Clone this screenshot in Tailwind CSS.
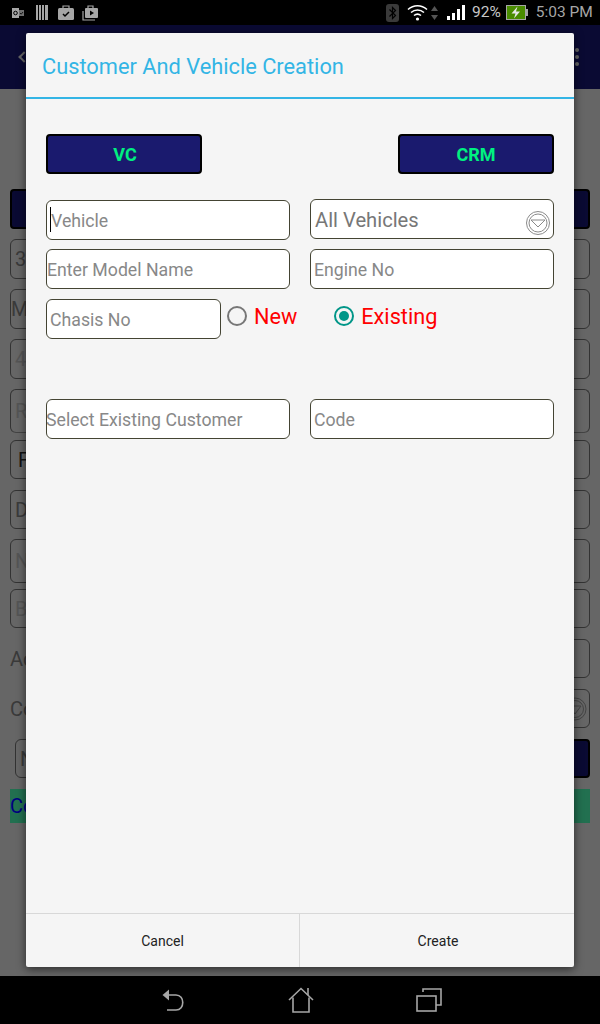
<!DOCTYPE html>
<html lang="en">
<head>
    <meta charset="UTF-8">
    <meta name="viewport" content="width=device-width, initial-scale=1.0">
    <title>Customer And Vehicle Creation</title>
    <script src="https://cdn.jsdelivr.net/npm/@tailwindcss/browser@4"></script>
</head>
<body class="bg-black">
    <div class="relative w-[600px] h-[1024px] overflow-hidden flex flex-col font-['Roboto',sans-serif]">
        <!-- Status bar -->
        <div class="h-[25px] bg-black flex items-center text-[#a6a6a6] shrink-0">
            <div class="flex items-center pl-[12px] w-[380px]">
                <svg width="12" height="10" viewBox="0 0 12 10"><rect x="0" y="0" width="7" height="10" fill="#a6a6a6"/><rect x="7" y="2" width="5" height="6" fill="#707070"/><circle cx="3.500" cy="5" r="1.800" fill="none" stroke="#000"/><path d="M8 5l1.200 1.200L11 4" fill="none" stroke="#000" stroke-width="0.800"/></svg>
                <svg class="ml-[12px]" width="12" height="15" viewBox="0 0 12 15" fill="#a6a6a6"><rect x="0" y="0" width="2" height="15"/><rect x="3" y="0" width="2" height="15"/><rect x="6" y="0" width="2" height="15"/><rect x="9" y="0" width="3" height="15"/></svg>
                <svg class="ml-[10px]" width="16" height="15" viewBox="0 0 16 15"><path d="M5 3V1h6v2" fill="none" stroke="#a6a6a6" stroke-width="1.200"/><rect x="0" y="3" width="16" height="12" rx="1.500" fill="#a6a6a6"/><path d="M5 9l2 2 4-4" fill="none" stroke="#000" stroke-width="1.500"/></svg>
                <svg class="ml-[8px]" width="16" height="16" viewBox="0 0 16 16"><path d="M1 6v9h12" fill="none" stroke="#a6a6a6" stroke-width="1.200"/><path d="M6 3V1h5v2" fill="none" stroke="#a6a6a6" stroke-width="1.200"/><rect x="3" y="3" width="13" height="10" rx="1" fill="#a6a6a6"/><path d="M8 5.500v5l4-2.500z" fill="#000"/></svg>
            </div>
            <svg class="ml-[6px]" width="13" height="18" viewBox="0 0 13 18"><rect width="13" height="18" rx="3" fill="#3a3a3a"/><path d="M3.500 5.500l6 6-3 3v-11l3 3-6 6" fill="none" stroke="#000" stroke-width="1.200"/></svg>
            <svg class="ml-[8px]" width="21" height="17" viewBox="0 0 21 17" fill="none" stroke="#fff" stroke-width="1.600"><path d="M1 5.500c5.500-5 13.500-5 19 0"/><path d="M4 8.500c3.800-3.300 9.200-3.300 13 0"/><path d="M7 11.500c2.200-1.800 4.800-1.800 7 0"/><circle cx="10.500" cy="15" r="1.600" fill="#fff" stroke="none"/></svg>
            <svg class="ml-[3px]" width="7" height="14" viewBox="0 0 7 14" fill="#555"><path d="M3.500 0L7 5H0z"/><path d="M3.500 14L7 9H0z"/></svg>
            <svg class="ml-[9px]" width="18" height="15" viewBox="0 0 18 15" fill="#fff"><rect x="0" y="11" width="3" height="4"/><rect x="5" y="8" width="3" height="7"/><rect x="10" y="4" width="3" height="11"/><rect x="15" y="0" width="3" height="15"/></svg>
            <span class="ml-[7px] text-[15.500px] leading-none text-[#c8c8c8]">92%</span>
            <svg class="ml-[5px]" width="22" height="15" viewBox="0 0 22 15"><rect x="0.500" y="0.500" width="19" height="14" fill="#4a8c00" stroke="#a6a6a6"/><rect x="20" y="4" width="2" height="7" fill="#a6a6a6"/><path d="M11.500 1.500L5.500 8.500h4l-1.500 5 6-7h-4z" fill="#e8e8e8"/></svg>
            <span class="ml-[8px] text-[15.500px] leading-none text-[#a6a6a6]">5:03 PM</span>
        </div>

        <!-- App bar behind the dialog -->
        <div class="h-[64px] bg-[#0a0a33] relative shrink-0 flex items-center justify-between pl-[20px] pr-[21px]">
            <span class="w-[8px] h-[8px] rotate-45 border-l-2 border-b-2 border-[#666]"></span>
            <span class="flex flex-col gap-[3px]">
                <span class="w-[4px] h-[4px] rounded-full bg-[#666]"></span>
                <span class="w-[4px] h-[4px] rounded-full bg-[#666]"></span>
                <span class="w-[4px] h-[4px] rounded-full bg-[#666]"></span>
            </span>
        </div>

        <!-- Form behind the dialog -->
        <div class="flex-1 bg-[#666666] px-[10px] pt-[100px] flex flex-col text-[20px] text-[#3a3a3a]">
            <div class="h-[40px] bg-[#0a0a33] border-2 border-black rounded-[4px]"></div>
            <div class="mt-[10px] h-[40px] border border-[#333] rounded-[6px] flex items-center pl-[4px]">3</div>
            <div class="mt-[10px] h-[40px] border border-[#333] rounded-[6px] flex items-center">M</div>
            <div class="mt-[10px] h-[40px] border border-[#333] rounded-[6px] flex items-center pl-[4px] text-[#555]">4</div>
            <div class="mt-[10px] h-[44px] border border-[#333] border-b-[#444] rounded-[6px] flex items-center pl-[4px] text-[#555]">R</div>
            <div class="mt-[7px] h-[39px] border border-[#333] rounded-[6px] flex items-center pl-[7px] text-[#111]">F</div>
            <div class="mt-[11px] h-[39px] border border-[#333] rounded-[6px] flex items-center pl-[4px]">D</div>
            <div class="mt-[10px] h-[44px] border border-[#333] rounded-[6px] flex items-center pl-[4px] text-[#555]">N</div>
            <div class="mt-[6px] h-[39px] border border-[#333] rounded-[6px] flex items-center pl-[4px] text-[#555]">B</div>
            <div class="mt-[11px] h-[39px] flex items-center">
                <span>Ad</span>
                <div class="ml-auto w-[60px] h-full border border-[#333] rounded-[6px]"></div>
            </div>
            <div class="mt-[11px] h-[39px] flex items-center">
                <span>Co</span>
                <div class="ml-auto w-[60px] h-full border border-[#333] rounded-[6px] flex items-center justify-end pr-[2px]">
                    <svg width="24" height="24" viewBox="0 0 24 24" fill="none" stroke="#444"><circle cx="12" cy="12" r="11"/><circle cx="12" cy="12" r="8.500"/><path d="M6 9h12l-6 8z"/></svg>
                </div>
            </div>
            <div class="mt-[11px] h-[39px] flex pl-[5px]">
                <div class="w-[40px] border border-[#333] rounded-[6px] flex items-center pl-[4px]">N</div>
                <div class="ml-auto w-[60px] bg-[#0a0a33] border-2 border-black rounded-[4px]"></div>
            </div>
            <div class="mt-[11px] h-[34px] bg-[#227050] flex items-center text-[#000080]">Co</div>
        </div>

        <!-- Navigation bar -->
        <div class="h-[48px] bg-black shrink-0 flex items-center pl-[161px] gap-[103px]">
            <svg width="24" height="24" viewBox="0 0 24 24" fill="none" stroke="#a6a6a6" stroke-width="1.600"><path d="M1.500 7L8 1.500v11z" fill="#a6a6a6" stroke="none"/><path d="M7 7h8c9 0 9 15 0 15H6"/></svg>
            <svg width="26" height="26" viewBox="0 0 26 26" fill="none" stroke="#a6a6a6" stroke-width="1.600"><path d="M1 13L13 1.500 25 13"/><path d="M5 10.500V25h16V10.500"/><path d="M20 8V1"/></svg>
            <svg class="-ml-[1px]" width="26" height="24" viewBox="0 0 26 24" fill="none" stroke="#a6a6a6" stroke-width="1.600"><rect x="1" y="8" width="19" height="15"/><path d="M7 4V1h18v16h-5"/></svg>
        </div>

        <!-- Dialog -->
        <div class="absolute left-[26px] top-[33px] w-[548px] h-[934px] bg-[#f5f5f5] rounded-[2px] shadow-[0_2px_10px_rgba(0,0,0,0.6)] flex flex-col">
            <div class="h-[66px] shrink-0 border-b-2 border-[#33b5e5] flex items-center pl-[16px] pt-[4px] text-[21.800px] text-[#33b5e5]">Customer And Vehicle Creation</div>

            <div class="flex-1 px-[20px] pt-[35px]">
                <div class="flex justify-between">
                    <button class="w-[156px] h-[40px] pt-[1px] pl-[2px] bg-[#1a1a6e] border-2 border-black rounded-[4px] text-[#00f080] text-[18px] font-bold">VC</button>
                    <button class="w-[156px] h-[40px] pt-[1px] bg-[#1a1a6e] border-2 border-black rounded-[4px] text-[#00f080] text-[18px] font-bold">CRM</button>
                </div>

                <div class="mt-[26px] flex justify-between items-start">
                    <div class="relative w-[244px] h-[40px]">
                        <input class="w-full h-full pt-[2px] bg-white border border-[#444433] rounded-[6px] pl-[4px] text-[17.700px] placeholder:text-[#888] outline-none" placeholder="Vehicle">
                        <span class="absolute left-[4px] top-[7px] w-[1px] h-[25px] bg-black"></span>
                    </div>
                    <div class="relative w-[244px] h-[40px] -mt-[1px] pt-[2px] bg-white border border-[#444433] rounded-[6px] flex items-center pl-[4px] text-[20.200px] text-[#777]">
                        All Vehicles
                        <svg class="absolute right-[3px] top-[11px]" width="24" height="24" viewBox="0 0 24 24" fill="none" stroke="#8a8a8a"><circle cx="12" cy="12" r="11.500"/><circle cx="12" cy="12" r="9"/><path d="M5 9h14l-7 7z"/></svg>
                    </div>
                </div>

                <div class="mt-[9px] flex justify-between">
                    <input class="w-[244px] h-[40px] pt-[2px] bg-white border border-[#444433] rounded-[6px] pl-[0px] text-[17.700px] placeholder:text-[#888] outline-none" placeholder="Enter Model Name">
                    <input class="w-[244px] h-[40px] pt-[2px] bg-white border border-[#444433] rounded-[6px] pl-[3px] text-[17.700px] placeholder:text-[#888] outline-none" placeholder="Engine No">
                </div>

                <div class="mt-[10px] flex items-start">
                    <input class="w-[175px] h-[40px] pt-[2px] bg-white border border-[#444433] rounded-[6px] pl-[3px] text-[17.700px] placeholder:text-[#888] outline-none" placeholder="Chasis No">
                    <div class="flex items-center ml-[6px] mt-[3px] h-[28px]">
                        <span class="w-[20px] h-[20px] rounded-full border-2 border-[#777]"></span>
                        <span class="ml-[7px] pt-[2px] text-[21.700px] text-[#ff0000]">New</span>
                    </div>
                    <div class="flex items-center ml-[37px] mt-[3px] h-[28px]">
                        <span class="w-[20px] h-[20px] rounded-full border-2 border-[#009688] flex items-center justify-center">
                            <span class="w-[10px] h-[10px] rounded-full bg-[#009688]"></span>
                        </span>
                        <span class="ml-[7px] pt-[2px] text-[21.700px] text-[#ff0000]">Existing</span>
                    </div>
                </div>

                <div class="mt-[60px] flex justify-between">
                    <input class="w-[244px] h-[40px] pt-[2px] bg-white border border-[#444433] rounded-[6px] pl-[0px] indent-[-1px] text-[17.700px] placeholder:text-[#888] outline-none" placeholder="Select Existing Customer">
                    <input class="w-[244px] h-[40px] pt-[2px] bg-white border border-[#444433] rounded-[6px] pl-[3px] text-[17.700px] placeholder:text-[#888] outline-none" placeholder="Code">
                </div>
            </div>

            <div class="h-[54px] shrink-0 border-t border-[#d8d8d8] flex text-[14px] text-[#222]">
                <button class="w-[274px] pt-[2px] border-r border-[#d8d8d8]">Cancel</button>
                <button class="flex-1 pt-[2px] pl-[2px]">Create</button>
            </div>
        </div>
    </div>
</body>
</html>
